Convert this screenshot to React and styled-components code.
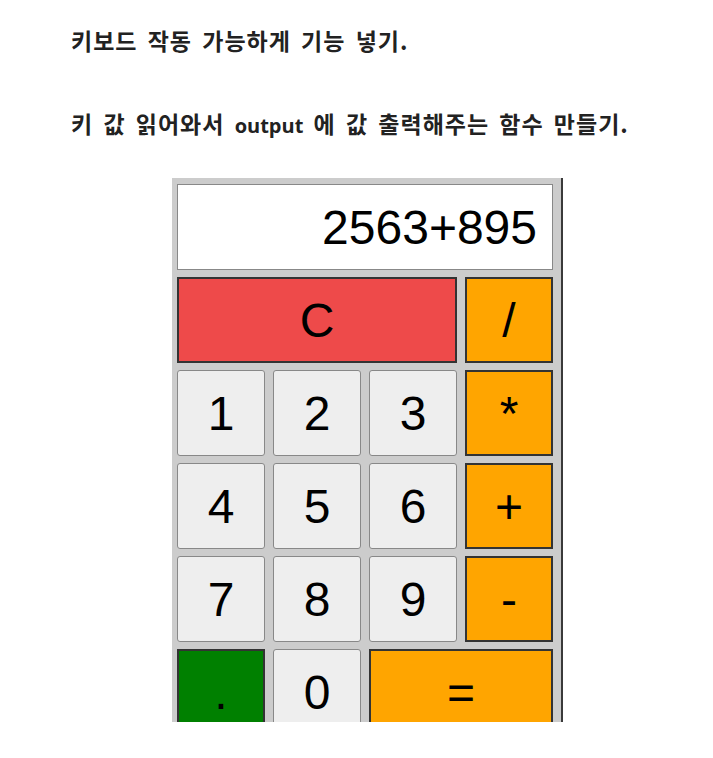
import styled, { createGlobalStyle } from 'styled-components'

const GlobalStyle = createGlobalStyle`
  body {
    margin: 0;
    background: #ffffff;
    font-family: "Noto Sans CJK KR", "Noto Sans", sans-serif;
  }
`;

const Page = styled.div`
  padding: 24px 0 0 71px;
`;

const Note = styled.p`
  margin: 0 0 ${(p) => p.$gap || 50}px 0;
  height: 33px;
  font-size: 23px;
  font-weight: bold;
  line-height: 33px;
  color: #222222;
  letter-spacing: 1px;
  word-spacing: 4px;
`;

const Code = styled.span`
  font-family: "Open Sans", "Noto Sans", sans-serif;
  font-size: 20px;
  line-height: 1;
  letter-spacing: 0;
  word-spacing: 0;
`;

const Calculator = styled.div`
  margin-left: 101px;
  width: 376px;
  height: 538px;
  padding: 6px 8px 0 5px;
  background: #cccccc;
  border-right: 2px solid #3a3a3a;
  overflow: hidden;
  display: grid;
  grid-template-columns: repeat(4, 88px);
  grid-auto-rows: 86px;
  column-gap: 8px;
  row-gap: 7px;
  align-content: start;
`;

const Output = styled.div`
  grid-column: span 4;
  box-sizing: border-box;
  background: #ffffff;
  border: 1px solid #888888;
  display: flex;
  align-items: center;
  justify-content: flex-end;
  padding-right: 15px;
  font-family: "Liberation Sans", Arial, sans-serif;
  font-size: 48px;
  color: #000000;
`;

const colors = {
  num: '#eeeeee',
  op: '#ffa500',
  clear: '#ee4a4a',
  dot: '#008000',
};

const Key = styled.button`
  grid-column: span ${(p) => p.$span || 1};
  box-sizing: border-box;
  margin: 0;
  padding: 0;
  background: ${(p) => colors[p.$kind]};
  border: ${(p) => (p.$kind === 'num' ? '1px solid #888888' : '2px solid #333333')};
  border-radius: ${(p) => (p.$kind === 'num' ? '3px' : '0')};
  font-family: "Liberation Sans", Arial, sans-serif;
  font-size: 48px;
  color: #000000;
  display: flex;
  align-items: center;
  justify-content: center;
`;

const keys = [
  { label: 'C', kind: 'clear', span: 3 },
  { label: '/', kind: 'op' },
  { label: '1', kind: 'num' },
  { label: '2', kind: 'num' },
  { label: '3', kind: 'num' },
  { label: '*', kind: 'op' },
  { label: '4', kind: 'num' },
  { label: '5', kind: 'num' },
  { label: '6', kind: 'num' },
  { label: '+', kind: 'op' },
  { label: '7', kind: 'num' },
  { label: '8', kind: 'num' },
  { label: '9', kind: 'num' },
  { label: '-', kind: 'op' },
  { label: '.', kind: 'dot' },
  { label: '0', kind: 'num' },
  { label: '=', kind: 'op', span: 2 },
];

function App() {
  return (
    <Page>
      <GlobalStyle />
      <Note $gap={50}>키보드 작동 가능하게 기능 넣기.</Note>
      <Note $gap={38}>
        키 값 읽어와서 <Code>output</Code> 에 값 출력해주는 함수 만들기.
      </Note>

      <Calculator>
        <Output>2563+895</Output>
        {keys.map((k) => (
          <Key key={k.label} $kind={k.kind} $span={k.span}>
            {k.label}
          </Key>
        ))}
      </Calculator>
    </Page>
  )
}

export default App
